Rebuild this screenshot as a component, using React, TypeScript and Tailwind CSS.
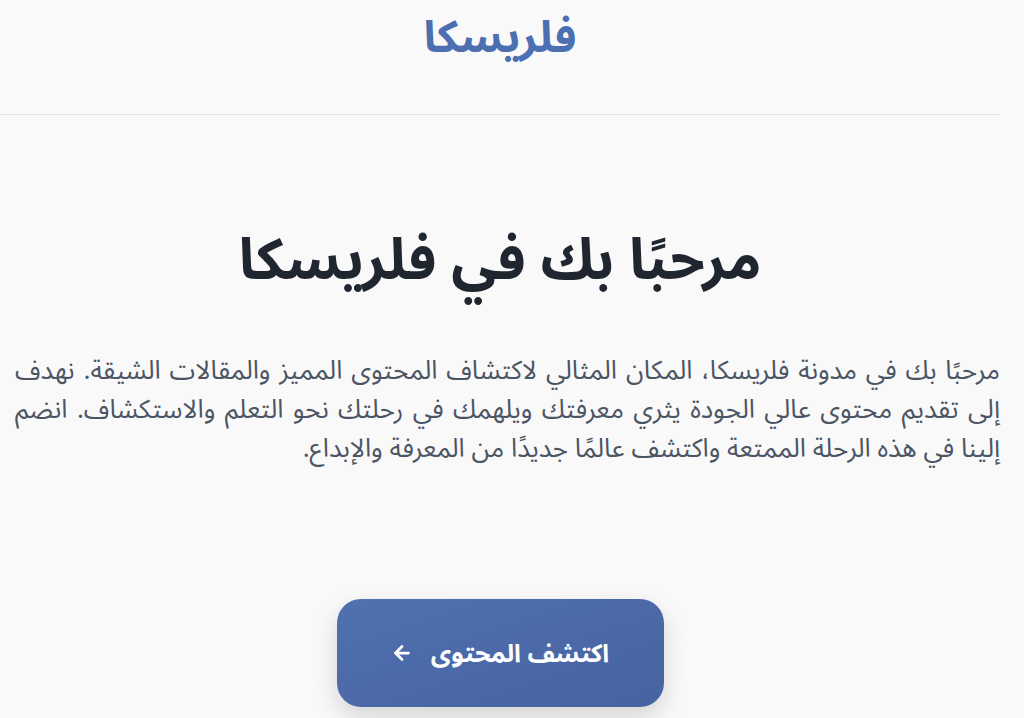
import React from "react";
import { ArrowLeft } from "lucide-react";

export default function App() {
  return (
    <div
      className="min-h-[718px] w-full bg-[#f9f9fa] overflow-hidden"
      style={{ fontFamily: '"Noto Sans", "Noto Sans Arabic", "DejaVu Sans", sans-serif' }}
    >
      <div dir="rtl" className="w-[1000px]">
        <header className="h-[115px] flex items-start justify-center pt-[3px] border-b border-[#dfe3ea]">
          <h2 className="text-[44px] font-bold text-[#4b6fb1] leading-[64px]">فلريسكا</h2>
        </header>
        <section className="flex flex-col items-center pt-[100px]">
          <h1 className="text-[57px] font-bold text-[#1f2630] leading-[84px]">مرحبًا بك في فلريسكا</h1>
          <p className="mt-[51px] w-[985px] self-start text-[26px] leading-[39px] text-[#4b5563] text-justify">
            مرحبًا بك في مدونة فلريسكا، المكان المثالي لاكتشاف المحتوى المميز والمقالات الشيقة. نهدف إلى تقديم محتوى عالي الجودة يثري معرفتك ويلهمك في رحلتك نحو التعلم والاستكشاف. انضم إلينا في هذه الرحلة الممتعة واكتشف عالمًا جديدًا من المعرفة والإبداع.
          </p>
          <button className="mt-[132px] w-[327px] h-[108px] rounded-[24px] bg-gradient-to-br from-[#5070b0] to-[#4763a0] shadow-[0_10px_25px_rgba(0,0,0,0.15)] text-white text-[25px] font-bold flex items-center justify-center gap-[18px]">
            <span>اكتشف المحتوى</span>
            <ArrowLeft size={22} strokeWidth={3} />
          </button>
        </section>
      </div>
    </div>
  );
}
